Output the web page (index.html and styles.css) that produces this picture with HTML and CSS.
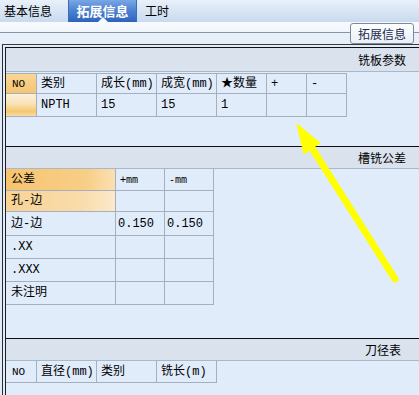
FILE: index.html
```html
<!DOCTYPE html>
<html>
<head>
<meta charset="utf-8">
<link rel="stylesheet" href="styles.css">
</head>
<body>
<div class="page">
  <div class="tabs">
    <div class="tab first">基本信息</div>
    <div class="tab active">拓展信息</div>
    <div class="tab last">工时</div>
  </div>
  <div class="groupbar">
    <div class="rule"></div>
    <div class="legend">拓展信息</div>
    <div class="rule end"></div>
  </div>
  <div class="frame">
    <div class="panel">
      <section class="sec sec1">
        <div class="sechead">铣板参数</div>
        <div class="grid gap">
          <div class="row h20">
            <div class="c w31 no orange">NO</div>
            <div class="c w60">类别</div>
            <div class="c w60">成长(mm)</div>
            <div class="c w60">成宽(mm)</div>
            <div class="c w50">★数量</div>
            <div class="c w40">+</div>
            <div class="c w40">-</div>
          </div>
          <div class="row h23">
            <div class="c w31 no rowsel"></div>
            <div class="c w60">NPTH</div>
            <div class="c w60">15</div>
            <div class="c w60">15</div>
            <div class="c w50">1</div>
            <div class="c w40"></div>
            <div class="c w40"></div>
          </div>
        </div>
      </section>
      <section class="sec sec2">
        <div class="sechead short">槽铣公差</div>
        <div class="grid">
          <div class="row h22">
            <div class="c w110 first orange2">公差</div>
            <div class="c w49 small">+mm</div>
            <div class="c w49 small">-mm</div>
          </div>
          <div class="row h21">
            <div class="c w110 first orange3">孔-边</div>
            <div class="c w49"></div>
            <div class="c w49"></div>
          </div>
          <div class="row h24">
            <div class="c w110 first">边-边</div>
            <div class="c w49 num">0.150</div>
            <div class="c w49 num">0.150</div>
          </div>
          <div class="row h23">
            <div class="c w110 first">.XX</div>
            <div class="c w49"></div>
            <div class="c w49"></div>
          </div>
          <div class="row h23">
            <div class="c w110 first">.XXX</div>
            <div class="c w49"></div>
            <div class="c w49"></div>
          </div>
          <div class="row h23">
            <div class="c w110 first">未注明</div>
            <div class="c w49"></div>
            <div class="c w49"></div>
          </div>
        </div>
      </section>
      <section class="sec sec3">
        <div class="sechead short tail">刀径表</div>
        <div class="grid">
          <div class="row h22">
            <div class="c w31 no">NO</div>
            <div class="c w60">直径(mm)</div>
            <div class="c w60">类别</div>
            <div class="c w60">铣长(m)</div>
          </div>
        </div>
      </section>
    </div>
  </div>
  <svg class="arrow" width="419" height="395" viewBox="0 0 419 395">
    <line x1="395" y1="279" x2="310" y2="145" stroke="#ffff00" stroke-width="7" stroke-linecap="round"/>
    <polygon points="297,124 320,143 304,154" fill="#ffff00" stroke="#ffff00" stroke-width="1" stroke-linejoin="round"/>
  </svg>
</div>
</body>
</html>
```
FILE: styles.css
```css
html, body {
  margin: 0;
  padding: 0;
}
body {
  width: 419px;
  height: 395px;
  overflow: hidden;
  background: #e1ecfb;
  font-family: "Liberation Mono", "Noto Sans CJK SC", monospace;
  font-size: 12px;
  color: #000;
}
.page {
  position: relative;
  width: 419px;
  height: 395px;
}
.tabs {
  display: flex;
  height: 22px;
  background: linear-gradient(to bottom, #e8f0fa, #c9daef);
  font-family: "Noto Sans CJK SC", sans-serif;
  font-size: 12px;
}
.tab {
  box-sizing: border-box;
  height: 22px;
  display: flex;
  align-items: center;
  line-height: 22px;
}
.tab.first {
  width: 68px;
  padding-left: 4px;
}
.tab.active {
  position: relative;
  width: 69px;
  justify-content: center;
  color: #fff;
  font-weight: bold;
  font-size: 13px;
  background: linear-gradient(to bottom, #7aa7e4, #4a80d0 50%, #2f63bb);
  border-left: 1px solid #3a6cbc;
  border-right: 1px solid #3a6cbc;
}
.tab.active::after {
  content: "";
  position: absolute;
  left: 50%;
  bottom: 0;
  margin-left: -5px;
  border-left: 5px solid transparent;
  border-right: 5px solid transparent;
  border-bottom: 5px solid #f6f9fd;
}
.tab.last {
  padding-left: 8px;
}
.groupbar {
  display: flex;
  align-items: flex-start;
  height: 22px;
  background: linear-gradient(to bottom, #f7fafd 0, #f1f6fc 10px, #e8f0fa 11px, #e6eef9 22px);
}
.rule {
  flex: 1;
  height: 1px;
  margin-top: 10px;
  background: #8793a6;
}
.rule.end {
  flex: 0 0 5px;
}
.legend {
  box-sizing: border-box;
  margin-top: 1px;
  width: 64px;
  height: 21px;
  border: 1px solid #7e8a9c;
  border-radius: 3px;
  background: linear-gradient(to bottom, #fdfeff, #e9f0f9);
  font-family: "Noto Sans CJK SC", sans-serif;
  font-size: 12px;
  color: #1e2c4a;
  display: flex;
  align-items: center;
  justify-content: center;
}
.frame {
  box-sizing: border-box;
  margin-left: 2px;
  height: 351px;
  border-top: 1px solid #3c3c3c;
  border-left: 1px solid #2c2c2c;
  padding-top: 2px;
  padding-left: 2px;
}
.panel {
  height: 100%;
  border-left: 1px solid #1e1e1e;
}
.sec {
  box-sizing: border-box;
  border-top: 1px solid #101010;
}
.sec1 { height: 99px; }
.sec2 { height: 192px; }
.sec3 { height: 60px; }
.sechead {
  box-sizing: border-box;
  height: 24px;
  border-bottom: 1px solid #a9b7ca;
  background: #dae2ee;
  font-family: "Noto Sans CJK SC", sans-serif;
  font-size: 12px;
  display: flex;
  align-items: center;
  justify-content: flex-end;
  padding-right: 13px;
}
.sechead.short { height: 22px; }
.sechead.tail { padding-right: 18px; }
.grid {
  display: inline-flex;
  flex-direction: column;
}
.grid.gap {
  margin-top: 1px;
  border-top: 1px solid #a5afbd;
}
.row {
  box-sizing: border-box;
  display: flex;
  border-bottom: 1px solid #a5afbd;
}
.h20 { height: 20px; }
.h21 { height: 21px; }
.h22 { height: 22px; }
.h23 { height: 23px; }
.h24 { height: 24px; }
.c {
  box-sizing: border-box;
  border-right: 1px solid #a5afbd;
  padding-left: 4px;
  display: flex;
  align-items: center;
  white-space: nowrap;
  line-height: 14px;
}
.w31 { width: 31px; }
.w40 { width: 40px; }
.w49 { width: 49px; }
.w50 { width: 50px; }
.w60 { width: 60px; }
.w110 { width: 110px; }
.no { padding-left: 6px; font-size: 11px; }
.first { padding-left: 5px; }
.num { padding-left: 2px; }
.small {
  font-family: "DejaVu Sans Mono", monospace;
  font-size: 10px;
  color: #000;
}
.orange {
  background: linear-gradient(to bottom, #f9d697, #f5c571);
}
.rowsel {
  background: linear-gradient(to bottom, #fbefdc 0, #fae2b5 45%, #f6c86f 80%, #f9dca8);
}
.orange2 {
  background: linear-gradient(to right, #f6c470, #f8cf88 75%, #fbe0b4);
}
.orange3 {
  background: linear-gradient(to right, #f8d396, #f9dcab 70%, #fbe9cc);
}
.arrow {
  position: absolute;
  left: 0;
  top: 0;
  pointer-events: none;
}
```
